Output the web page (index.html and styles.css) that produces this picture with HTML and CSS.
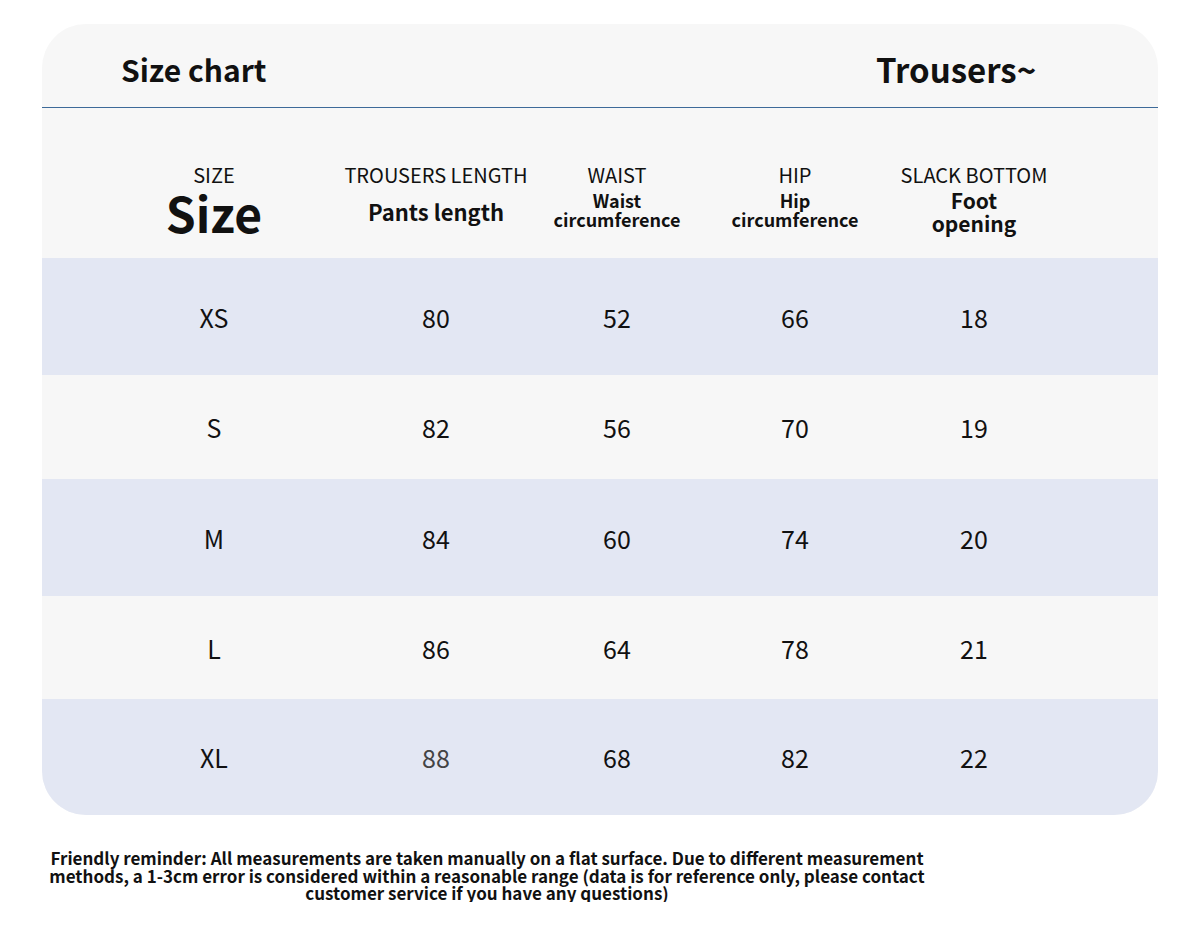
FILE: index.html
```html
<!DOCTYPE html>
<html lang="en">
<head>
<meta charset="utf-8">
<title>Size chart</title>
<link rel="stylesheet" href="styles.css">
</head>
<body>
<div class="card">
  <div class="card-head">
    <div class="title">Size chart</div>
    <div class="title-right">Trousers~</div>
  </div>
  <div class="grid head-row">
    <div class="hcell"><div class="label">SIZE</div><div class="sub"><div class="big">Size</div></div></div>
    <div class="hcell"><div class="label">TROUSERS LENGTH</div><div class="sub"><div class="mid">Pants length</div></div></div>
    <div class="hcell"><div class="label">WAIST</div><div class="sub"><div class="small"><div>Waist</div><div>circumference</div></div></div></div>
    <div class="hcell"><div class="label">HIP</div><div class="sub"><div class="small"><div>Hip</div><div>circumference</div></div></div></div>
    <div class="hcell"><div class="label">SLACK BOTTOM</div><div class="sub"><div class="foot"><div>Foot</div><div>opening</div></div></div></div>
  </div>
  <div class="grid row blue tall"><div>XS</div><div>80</div><div>52</div><div>66</div><div>18</div></div>
  <div class="grid row plain"><div>S</div><div>82</div><div>56</div><div>70</div><div>19</div></div>
  <div class="grid row blue tall"><div>M</div><div>84</div><div>60</div><div>74</div><div>20</div></div>
  <div class="grid row plain short"><div>L</div><div>86</div><div>64</div><div>78</div><div>21</div></div>
  <div class="grid row blue last"><div>XL</div><div class="grey">88</div><div>68</div><div>82</div><div>22</div></div>
</div>
<p class="note">Friendly reminder: All measurements are taken manually on a flat surface. Due to different measurement methods, a 1-3cm error is considered within a reasonable range (data is for reference only, please contact customer service if you have any questions)</p>
</body>
</html>
```

FILE: styles.css
```css
* { box-sizing: border-box; }
html, body { margin: 0; padding: 0; background: #ffffff; }
body {
  font-family: "Noto Sans CJK SC", "Noto Sans", sans-serif;
  color: #111111;
  width: 1200px;
}
.card {
  margin: 24px 42px 0 42px;
  width: 1116px;
  background: #f7f7f7;
  border-radius: 44px;
  overflow: hidden;
}
.card-head {
  height: 84px;
  padding-top: 6px;
  border-bottom: 1px solid #3d6a99;
  display: grid;
  grid-template-columns: 834px auto;
  align-items: center;
}
.title {
  padding-left: 79px;
  font-size: 30px;
  font-weight: 700;
  line-height: 36px;
}
.title-right {
  font-size: 33px;
  font-weight: 700;
  line-height: 40px;
}
.grid {
  display: grid;
  grid-template-columns: 248px 196px 166px 190px 168px;
  padding-left: 48px;
}
.head-row {
  height: 150px;
  padding-top: 55px;
  align-items: start;
}
.hcell {
  text-align: center;
  white-space: nowrap;
}
.label {
  font-size: 20px;
  line-height: 24px;
  font-weight: 400;
}
.sub {
  height: 50px;
  display: flex;
  flex-direction: column;
  align-items: center;
  justify-content: center;
  font-weight: 700;
}
.big { font-size: 48px; line-height: 46px; }
.mid { font-size: 22px; line-height: 26px; padding-bottom: 2px; }
.small { font-size: 18px; line-height: 19px; padding-bottom: 4px; }
.foot { font-size: 21px; line-height: 23px; }
.row {
  align-items: center;
  text-align: center;
  font-size: 25px;
  line-height: 30px;
  height: 104px;
}
.row.tall { height: 117px; }
.row.short { height: 103px; }
.row.last { height: 116px; }
.blue { background: #e3e7f3; }
.plain { background: #f7f7f7; }
.grey { color: #444444; }
.note {
  width: 880px;
  margin: 34px 0 0 47px;
  text-align: center;
  font-size: 17px;
  line-height: 17.5px;
  font-weight: 700;
}
```
